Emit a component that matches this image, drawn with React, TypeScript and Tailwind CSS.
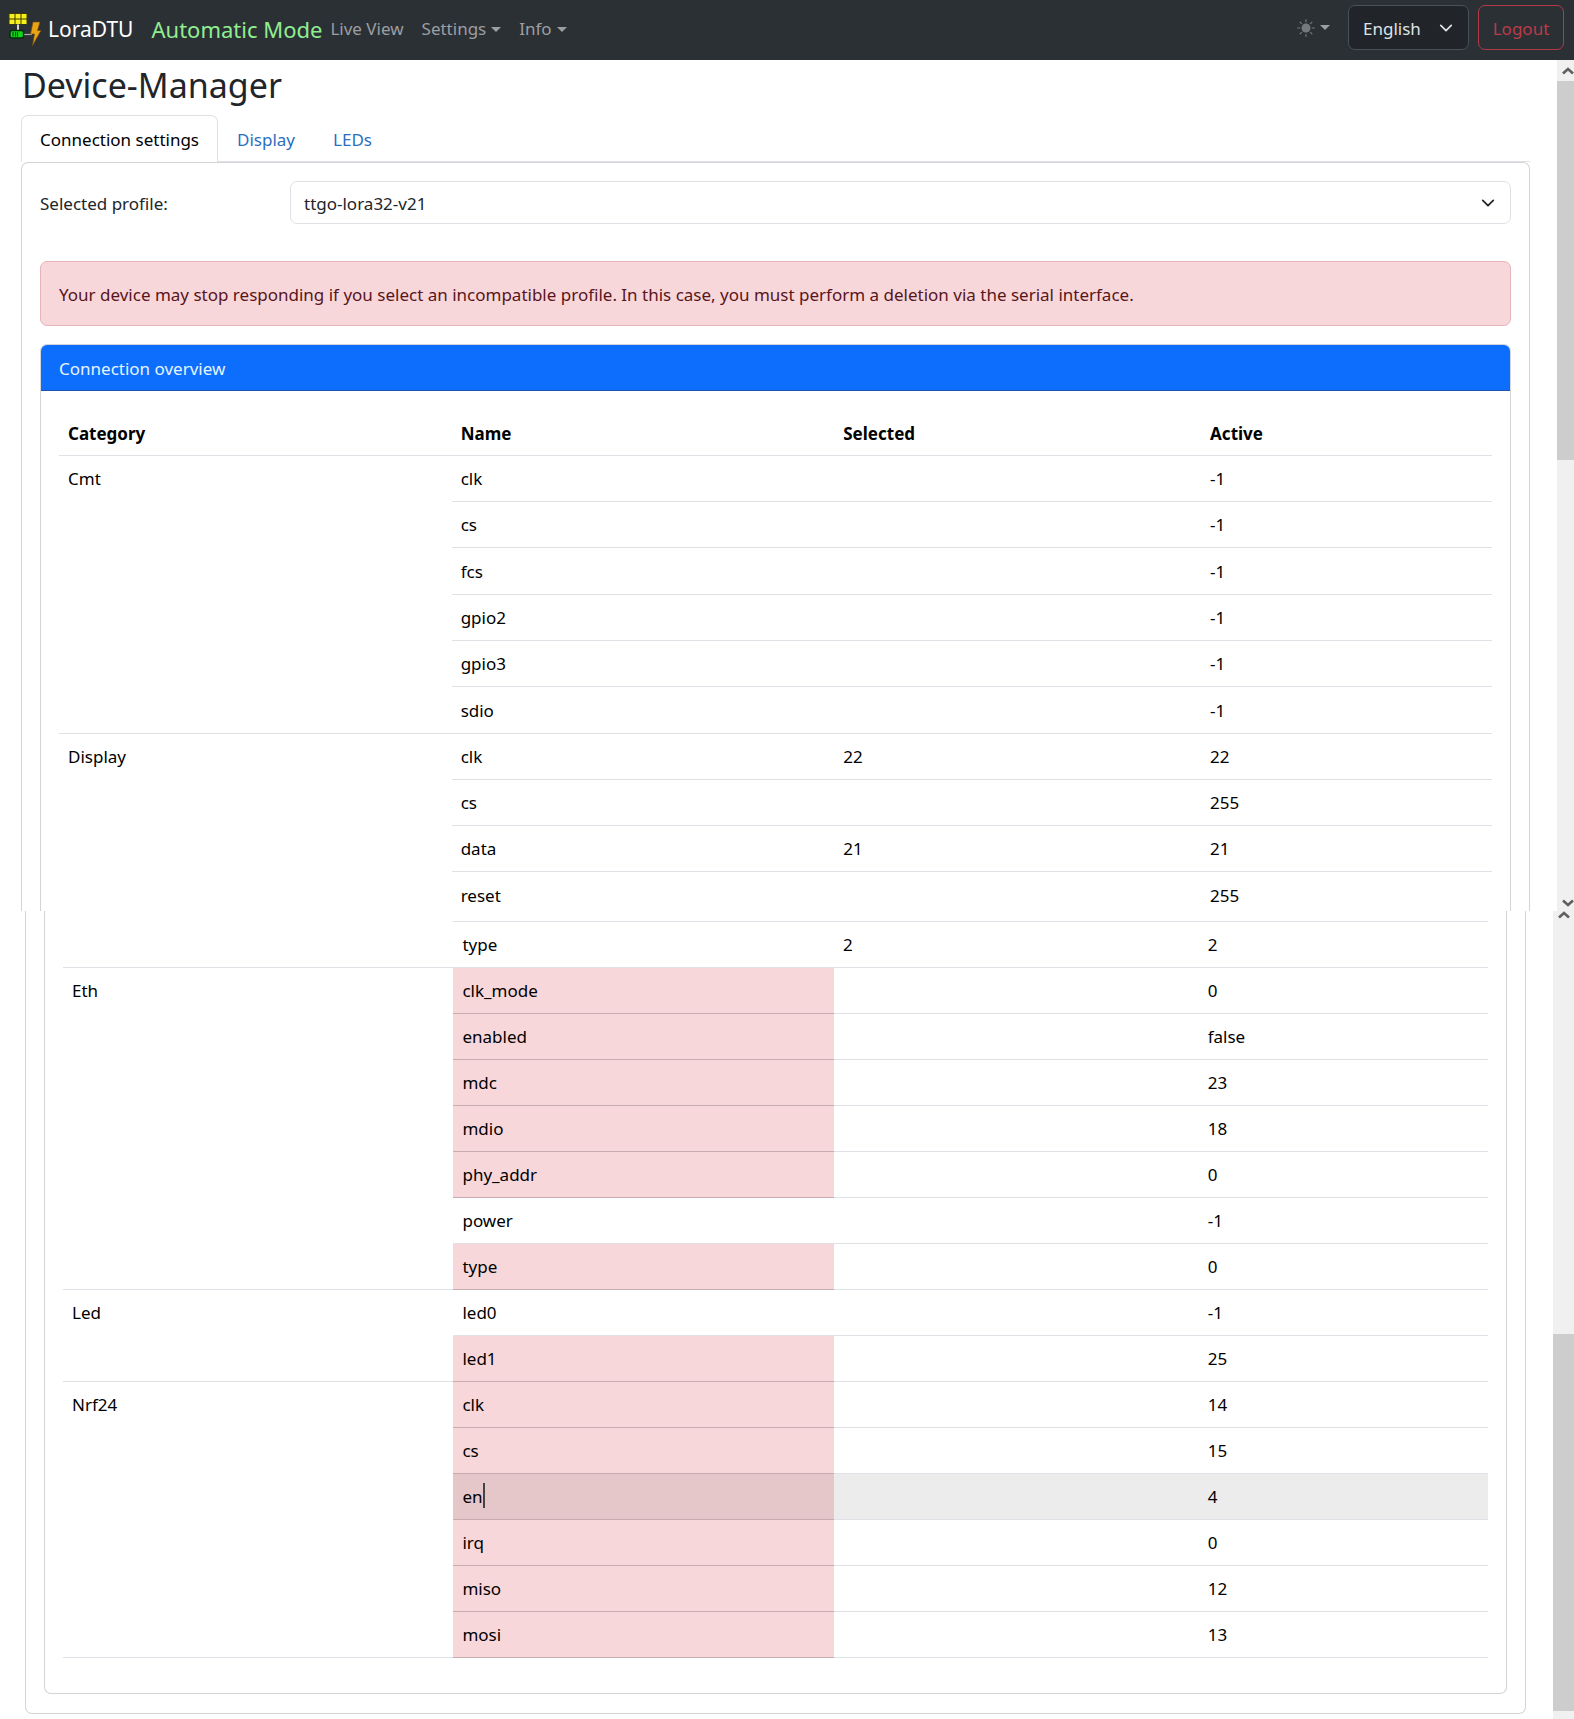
import type { ReactNode } from "react";

type Row = {
  name: string;
  selected?: string;
  active: string;
  changed?: boolean;
  hovered?: boolean;
  tall?: boolean;
};
type Group = { category: string; rows: Row[] };

const upperGroups: Group[] = [
  {
    category: "Cmt",
    rows: [
      { name: "clk", active: "-1" },
      { name: "cs", active: "-1" },
      { name: "fcs", active: "-1", tall: true },
      { name: "gpio2", active: "-1" },
      { name: "gpio3", active: "-1" },
      { name: "sdio", active: "-1", tall: true },
    ],
  },
  {
    category: "Display",
    rows: [
      { name: "clk", selected: "22", active: "22" },
      { name: "cs", active: "255" },
      { name: "data", selected: "21", active: "21" },
      { name: "reset", active: "255", tall: true },
    ],
  },
];

const lowerGroups: Group[] = [
  { category: "", rows: [{ name: "type", selected: "2", active: "2" }] },
  {
    category: "Eth",
    rows: [
      { name: "clk_mode", active: "0", changed: true },
      { name: "enabled", active: "false", changed: true },
      { name: "mdc", active: "23", changed: true },
      { name: "mdio", active: "18", changed: true },
      { name: "phy_addr", active: "0", changed: true },
      { name: "power", active: "-1" },
      { name: "type", active: "0", changed: true },
    ],
  },
  {
    category: "Led",
    rows: [
      { name: "led0", active: "-1" },
      { name: "led1", active: "25", changed: true },
    ],
  },
  {
    category: "Nrf24",
    rows: [
      { name: "clk", active: "14", changed: true },
      { name: "cs", active: "15", changed: true },
      { name: "en", active: "4", changed: true, hovered: true },
      { name: "irq", active: "0", changed: true },
      { name: "miso", active: "12", changed: true },
      { name: "mosi", active: "13", changed: true },
    ],
  },
];

function Logo() {
  return (
    <svg viewBox="0 0 36 36" className="size-9" aria-hidden="true">
      <rect x="0.500" y="2" width="19" height="11.500" fill="#3b3a08" />
      {[1.5, 7.5, 13.5].map((x) =>
        [3, 8.5].map((y) => <rect key={`${x}-${y}`} x={x} y={y} width="5" height="4.500" fill="#f7f01c" />),
      )}
      <path d="M10 13.500v6" stroke="#d8d8d8" strokeWidth="2" />
      <path d="M16 23.500h8" stroke="#a9acae" strokeWidth="1.2" />
      <rect x="2" y="19.500" width="13.500" height="7.500" rx="2" fill="#12d81c" stroke="#062d08" strokeWidth="1.400" />
      <path d="M5 21v4.500M7.500 21v4.500M9.500 21v4.500" stroke="#064a0b" strokeWidth="1.1" />
      <path d="M25 11h7l-2.500 8.500h3.500L24.500 34.500l2-11.500H22.500z" fill="#e8a317" stroke="#7a4d06" strokeWidth="0.7" />
    </svg>
  );
}

function Sun() {
  return (
    <svg viewBox="0 0 16 16" className="size-[18px]" fill="#75797c" stroke="#75797c" aria-hidden="true">
      <circle cx="8" cy="8" r="4" stroke="none" />
      <path
        d="M8 0.500v2M8 13.500v2M0.500 8h2M13.500 8h2M2.700 2.700l1.400 1.400M11.900 11.900l1.400 1.400M2.700 13.300l1.400-1.400M11.900 4.100l1.400-1.400"
        strokeLinecap="round"
      />
    </svg>
  );
}

function Caret() {
  return (
    <svg viewBox="0 0 10 5" className="h-[5px] w-[10px]" fill="currentColor" aria-hidden="true">
      <path d="M0 0h10L5 5z" />
    </svg>
  );
}

function Chevron() {
  return (
    <svg
      viewBox="0 0 16 16"
      className="pointer-events-none absolute top-1/2 right-4 size-[14px] -translate-y-1/2"
      fill="none"
      stroke="currentColor"
      strokeWidth="2"
      strokeLinecap="round"
      strokeLinejoin="round"
      aria-hidden="true"
    >
      <path d="m2 5 6 6 6-6" />
    </svg>
  );
}

function ScrollArrow({ down = false }: { down?: boolean }) {
  return (
    <svg viewBox="0 0 12 8" className="h-2 w-3" fill="none" stroke="#606060" strokeWidth="2.600" aria-hidden="true">
      <path d={down ? "M1 1.500l5 4.500 5-4.500" : "M1 6.500L6 2l5 4.500"} />
    </svg>
  );
}

function Navbar() {
  return (
    <nav className="flex h-[60px] items-center bg-[#2b3035] pr-[10px] pb-[5px] pl-2 text-[17px] text-[#9c9fa2]">
      <a href="#home" className="flex items-center gap-1 pt-[3px] text-[21px] text-white">
        <Logo />
        LoraDTU
      </a>
      <span className="ml-[18px] pt-[3px] text-[22px] text-[#90ee90]">Automatic Mode</span>
      <a href="#live" className="ml-2 pt-[3px]">
        Live View
      </a>
      <button type="button" className="ml-[18px] flex items-center gap-[5px] pt-[3px]">
        Settings
        <Caret />
      </button>
      <button type="button" className="ml-[18px] flex items-center gap-[5px] pt-[3px]">
        Info
        <Caret />
      </button>
      <button type="button" aria-label="Theme" className="mr-[18px] ml-auto flex items-center gap-[5px]">
        <Sun />
        <Caret />
      </button>
      <div className="relative text-[#dee2e6]">
        <select
          aria-label="Language"
          className="h-[45px] w-[121px] appearance-none rounded-[7px] border border-[#495057] bg-[#212529] pt-0.5 pl-[14px]"
        >
          <option>English</option>
        </select>
        <Chevron />
      </div>
      <button
        type="button"
        className="ml-[9px] h-[45px] w-[86px] rounded-[7px] border border-[#b23a48] pt-0.5 text-center text-[#b93c49]"
      >
        Logout
      </button>
    </nav>
  );
}

function Columns({ children }: { children: ReactNode }) {
  return (
    <table className="w-full table-fixed border-separate border-spacing-0 text-left text-black">
      <colgroup>
        <col className="w-[27.400%]" />
        <col className="w-[26.700%]" />
        <col className="w-[25.600%]" />
        <col />
      </colgroup>
      {children}
    </table>
  );
}

function GroupRows({ groups }: { groups: Group[] }) {
  return groups.map((group) =>
    group.rows.map((row, i) => {
      const height = row.tall ? "h-[47px]" : "h-[46px]";
      const plain = row.hovered ? "bg-[#ececec]" : "";
      const name = row.hovered
        ? "bg-[#e5c7ca] border-[#c6acae]"
        : row.changed
          ? "bg-[#f8d7da] border-[#c6acae]"
          : "border-[#dee2e6]";
      return (
        <tr key={`${group.category}-${row.name}`} className={height}>
          {i === 0 && (
            <td rowSpan={group.rows.length} className="border-b border-[#dee2e6] px-[9px] pt-[11px] align-top">
              {group.category}
            </td>
          )}
          <td className={`border-b px-[9px] pt-px ${name}`}>
            <span className="relative">
              {row.name}
              {row.hovered && <span className="absolute -top-0.5 -right-0.5 h-[25px] w-[2px] bg-[#444]" />}
            </span>
          </td>
          <td className={`border-b border-[#dee2e6] px-[9px] pt-px ${plain}`}>{row.selected}</td>
          <td className={`border-b border-[#dee2e6] px-[9px] pt-px ${plain}`}>{row.active}</td>
        </tr>
      );
    }),
  );
}

function UpperView() {
  return (
    <section className="flex h-[851px] overflow-hidden">
      <main className="min-w-0 flex-1 pr-[27px] pl-[21px]">
        <h1 className="pt-[3px] pl-px text-[34px] leading-[44px] text-[#212529]">Device-Manager</h1>
        <div role="tablist" className="mt-2 flex h-[47px] border-b border-[#dee2e6]">
          <button
            role="tab"
            aria-selected="true"
            type="button"
            className="-mb-px h-[47px] rounded-t-[7px] border border-b-0 border-[#dee2e6] bg-white px-[18px] pt-px text-black"
          >
            Connection settings
          </button>
          <button role="tab" aria-selected="false" type="button" className="px-[19px] pt-[3px] text-[#2a6fc0]">
            Display
          </button>
          <button role="tab" aria-selected="false" type="button" className="px-[19px] pt-[3px] text-[#2a6fc0]">
            LEDs
          </button>
        </div>
        <div className="rounded-t-[7px] border border-b-0 border-[#d3d4d5] px-[18px] pt-[18px]">
          <div className="flex items-center">
            <label htmlFor="profile" className="w-[250px] shrink-0 pt-0.5">
              Selected profile:
            </label>
            <div className="relative flex-1">
              <select
                id="profile"
                className="h-[43px] w-full appearance-none rounded-[7px] border border-[#dee2e6] bg-white pt-0.5 pl-[13px]"
              >
                <option>ttgo-lora32-v21</option>
              </select>
              <Chevron />
            </div>
          </div>
          <div
            role="alert"
            className="mt-[37px] flex h-[65px] items-center rounded-[7px] border border-[#e6b5ba] bg-[#f8d7da] px-[18px] pt-0.5 text-[#58151c]"
          >
            Your device may stop responding if you select an incompatible profile. In this case, you must perform a
            deletion via the serial interface.
          </div>
          <div className="mt-[18px] h-[600px] rounded-t-[7px] border border-[#d3d4d5]">
            <h2 className="flex h-[46px] items-center rounded-t-[6px] border-b border-[#1a55ae] bg-[#0d6efd] px-[18px] pt-0.5 text-[#e3f4ff]">
              Connection overview
            </h2>
            <div className="px-[18px] pt-[18px]">
              <Columns>
                <thead>
                  <tr className="h-[47px]">
                    {["Category", "Name", "Selected", "Active"].map((h) => (
                      <th key={h} scope="col" className="border-b border-[#dee2e6] px-[9px] pt-1 font-bold">
                        {h}
                      </th>
                    ))}
                  </tr>
                </thead>
                <tbody>
                  <GroupRows groups={upperGroups} />
                </tbody>
              </Columns>
            </div>
          </div>
        </div>
      </main>
      <div className="w-[17px] overflow-hidden bg-[#f0f0f0]">
        <div className="flex h-full w-[21px] flex-col items-center">
          <div className="flex h-[21px] items-center">
            <ScrollArrow />
          </div>
          <div className="h-[379px] w-full bg-[#cdcdcd]" />
          <div className="mt-auto mb-1">
            <ScrollArrow down />
          </div>
        </div>
      </div>
    </section>
  );
}

function LowerView() {
  return (
    <section className="flex h-[808px] overflow-hidden">
      <div className="min-w-0 flex-1 pr-[27px] pb-[5px] pl-[25px]">
        <div className="h-full rounded-b-[7px] border border-t-0 border-[#d3d4d5] px-[18px] pb-[19px]">
          <div className="h-full rounded-b-[7px] border border-t-0 border-[#d3d4d5] px-[18px]">
            <Columns>
              <tbody>
                <tr className="h-[11px]" aria-hidden="true">
                  <td />
                  <td className="border-b border-[#dee2e6]" />
                  <td className="border-b border-[#dee2e6]" />
                  <td className="border-b border-[#dee2e6]" />
                </tr>
                <GroupRows groups={lowerGroups} />
              </tbody>
            </Columns>
          </div>
        </div>
      </div>
      <div className="flex w-[21px] flex-col items-center bg-[#f0f0f0]">
        <ScrollArrow />
        <div className="mt-auto mb-2 h-[377px] w-full bg-[#cdcdcd]" />
      </div>
    </section>
  );
}

export default function App() {
  return (
    <div className="bg-white font-['Noto_Sans','Open_Sans',sans-serif] text-[17px] leading-6 text-[#212529]">
      <Navbar />
      <UpperView />
      <LowerView />
    </div>
  );
}
